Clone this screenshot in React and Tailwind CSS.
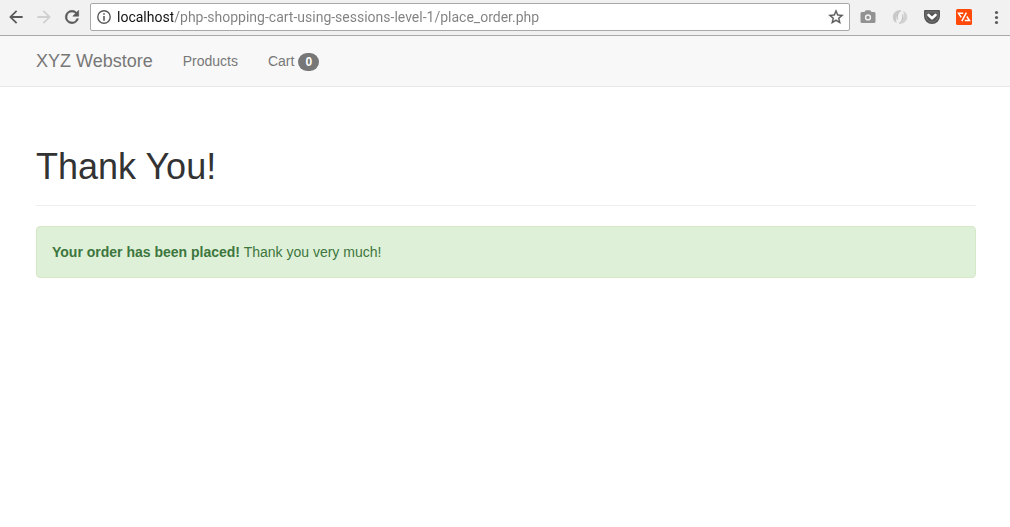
import React from "react";

const iconButton = "flex h-7 w-8 shrink-0 items-center justify-center";

function BrowserBar() {
  return (
    <header className="flex h-9 items-center border-b border-[#a9a9a9] bg-[#f1f1f1] pb-px text-[#5a5a5a]">
      <div className="flex w-[90px] shrink-0 items-center pl-0.5">
        <button type="button" aria-label="Back" className="flex h-7 w-7 items-center justify-center">
          <svg viewBox="0 0 24 24" className="size-5" fill="currentColor">
            <path d="M20 10.8H8l5.5-5.5L12 3.8 3.8 12l8.2 8.2 1.5-1.5L8 13.2h12z" />
          </svg>
        </button>
        <button type="button" aria-label="Forward" className="flex h-7 w-7 items-center justify-center text-[#d0d0d0]">
          <svg viewBox="0 0 24 24" className="size-5" fill="currentColor">
            <path d="M4 10.8h12l-5.5-5.5L12 3.8l8.2 8.2-8.2 8.2-1.5-1.5 5.5-5.5H4z" />
          </svg>
        </button>
        <button type="button" aria-label="Reload" className="flex h-7 w-7 items-center justify-center">
          <svg viewBox="0 0 24 24" className="size-5" fill="currentColor" stroke="currentColor" strokeWidth="0.7">
            <path d="M17.65 6.35A7.96 7.96 0 0 0 12 4a8 8 0 1 0 7.73 10h-2.08A6 6 0 1 1 12 6c1.66 0 3.14.69 4.22 1.78L13 11h7V4z" />
          </svg>
        </button>
      </div>
      <div className="flex h-7 min-w-0 flex-1 items-center rounded-xs border border-[#a9a9a9] bg-white">
        <button type="button" aria-label="Site information" className="flex w-[26px] shrink-0 items-center justify-center">
          <svg viewBox="0 0 14 14" className="size-3.5">
            <circle cx="7" cy="7" r="6.2" fill="none" stroke="currentColor" strokeWidth="1.4" />
            <path d="M6.2 3.3h1.6v1.5H6.2zM6.2 6h1.6v4.8H6.2z" fill="currentColor" />
          </svg>
        </button>
        <input
          type="text"
          aria-label="Address"
          defaultValue="localhost/php-shopping-cart-using-sessions-level-1/place_order.php"
          className="h-6 min-w-0 flex-1 bg-[linear-gradient(to_right,#111_56px,#808080_56px)] bg-clip-text font-[Roboto,'Noto_Sans',sans-serif] text-sm text-transparent caret-black outline-none"
        />
        <button type="button" aria-label="Bookmark this page" className="flex w-[26px] shrink-0 items-center justify-center">
          <svg viewBox="0 0 24 24" className="size-[18px]" fill="currentColor" stroke="currentColor" strokeWidth="0.4">
            <path d="m22 9.24-7.19-.62L12 2 9.19 8.63 2 9.24l5.46 4.73L5.82 21 12 17.27 18.18 21l-1.63-7.03zM12 15.4l-3.76 2.27 1-4.28-3.32-2.88 4.38-.38L12 6.1l1.71 4.04 4.38.38-3.32 2.88 1 4.28z" />
          </svg>
        </button>
      </div>
      <div className="flex shrink-0 items-center pl-0.5 -mr-0.5">
        <button type="button" aria-label="Screenshot" className={iconButton}>
          <svg viewBox="0 0 24 24" className="size-[18px]" fill="#929292">
            <path fillRule="evenodd" d="M9 3 7.2 5.2H4c-1.1 0-2 .9-2 2V18c0 1.1.9 2 2 2h16c1.1 0 2-.9 2-2V7.2c0-1.1-.9-2-2-2h-3.2L15 3zm3 13.7a4.2 4.2 0 1 1 0-8.4 4.2 4.2 0 0 1 0 8.4z" />
            <circle cx="12" cy="12.5" r="2.2" />
          </svg>
        </button>
        <button type="button" aria-label="Sync extension" className={iconButton}>
          <svg viewBox="0 0 16 16" className="size-4">
            <path d="M9 1C4.500 1 .8 3.800.8 8c0 2.800 1.500 4.900 3.900 6C3.500 9.500 4.800 4.500 9 1z" fill="#c9c9c9" />
            <path d="M7 15c4.500 0 8.200-2.800 8.200-7 0-2.800-1.500-4.900-3.900-6C12.500 6.500 11.200 11.500 7 15z" fill="#d2d2d2" />
            <path d="M9 1.300C5.600 4.300 4.700 7.300 5.600 10.600M7 14.700c3.400-3 4.300-6 3.400-9.300" fill="none" stroke="#bdbdbd" strokeWidth="1" />
          </svg>
        </button>
        <button type="button" aria-label="Save to Pocket" className={iconButton}>
          <svg viewBox="0 0 16 14" className="h-3.5 w-4">
            <path d="M1.2 0h13.6C15.600 0 16 .4 16 1.200V6a8 8 0 0 1-16 0V1.200C0 .4.400 0 1.200 0z" fill="#555" />
            <path d="M2 2h12v4a6 6 0 0 1-12 0z" fill="none" stroke="#858585" strokeWidth="0.7" />
            <path d="m4.500 5 3.500 3.300L11.500 5" fill="none" stroke="#fff" strokeWidth="2.6" strokeLinecap="round" strokeLinejoin="round" />
          </svg>
        </button>
        <button type="button" aria-label="Code extension" className={iconButton}>
          <svg viewBox="0 0 16 16" className="size-4">
            <rect width="16" height="16" rx="1.5" fill="#ff4a0a" />
            <path d="M7.2 4.200H2.500L5.200 8.300M10.400 3.600 5.800 12.200M8.800 11.600h4.700L10.800 7.500" fill="none" stroke="#fff" strokeWidth="1.5" />
          </svg>
        </button>
        <button type="button" aria-label="Browser menu" className={iconButton}>
          <svg viewBox="0 0 16 16" className="size-4" fill="currentColor">
            <circle cx="8.5" cy="3.5" r="1.6" />
            <circle cx="8.5" cy="8.5" r="1.6" />
            <circle cx="8.5" cy="13.5" r="1.6" />
          </svg>
        </button>
      </div>
    </header>
  );
}

function Navbar() {
  return (
    <nav className="border-b border-[#e7e7e7] bg-[#f8f8f8] pl-9 pr-[34px] text-[#777]">
      <div className="flex h-[50px] items-center">
        <a href="#home" className="pr-[15px] text-lg leading-5">XYZ Webstore</a>
        <a href="#products" className="px-[15px]">Products</a>
        <a href="#cart" className="flex items-center gap-1 px-[15px]">
          Cart
          <span className="mt-0.5 rounded-full bg-[#777] px-[7px] py-[3px] text-xs leading-3 font-bold text-white">0</span>
        </a>
      </div>
    </nav>
  );
}

export default function App() {
  return (
    <div className="min-h-screen bg-white font-['Liberation_Sans',Arial,sans-serif] text-sm leading-5 text-[#333]">
      <BrowserBar />
      <Navbar />
      <main className="pt-[60px] pr-[34px] pb-5 pl-9">
        <h1 className="mb-5 border-b border-[#eee] pb-[18px] text-4xl leading-10 font-normal">Thank You!</h1>
        <div role="status" className="rounded-sm border border-[#d6e9c6] bg-[#dff0d8] p-[15px] text-[#3c763d]">
          <strong className="font-bold">Your order has been placed!</strong> Thank you very much!
        </div>
      </main>
    </div>
  );
}
